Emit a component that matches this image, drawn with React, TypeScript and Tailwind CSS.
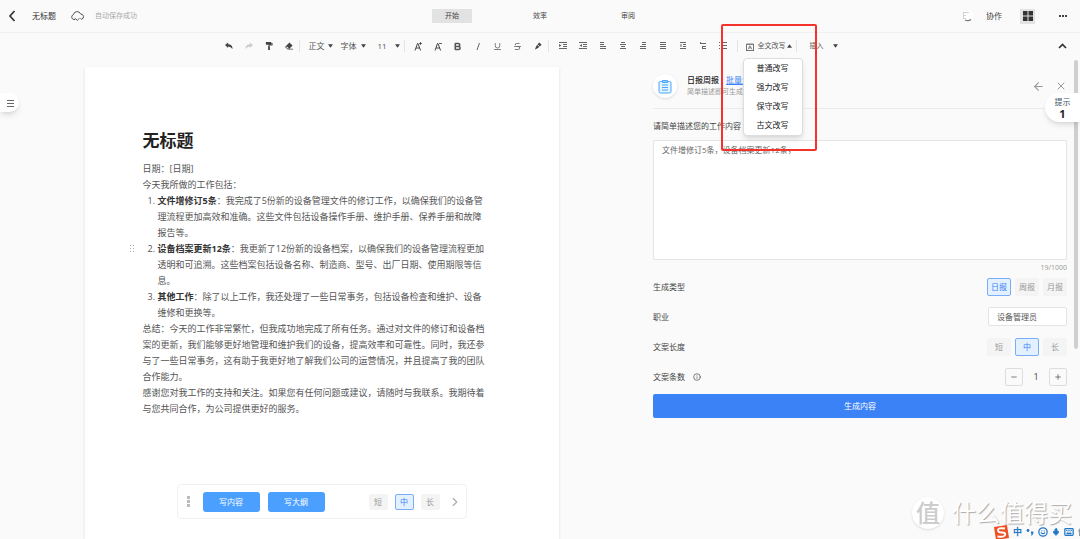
import React from "react";
import { Bold, Underline, Strikethrough, ArrowLeft, X, Info, Minus, Plus, Mic, Keyboard, Smile, ChevronRight } from "lucide-react";

type Kids = { children: React.ReactNode };

function Tool({ label, children }: Kids & { label: string }) {
  return (
    <button aria-label={label} className="flex h-5 w-5 items-center justify-center">
      {children}
    </button>
  );
}

function Glyph({ d, fill = "#444" }: { d: string; fill?: string }) {
  return (
    <svg viewBox="0 0 9 9" className="h-2 w-2" fill={fill} fillRule="evenodd">
      <path d={d} />
    </svg>
  );
}

function Lines({ d, marks = "" }: { d: string; marks?: string }) {
  return (
    <svg viewBox="0 0 8 8" className="h-2 w-2" fill="none" stroke="#666">
      <path d={d} />
      <path d={marks} fill="#666" stroke="none" />
    </svg>
  );
}

function Separator() {
  return <div className="h-3 w-px bg-[#e4e4e4]" />;
}

function Caret({ up = false }: { up?: boolean }) {
  return (
    <svg viewBox="0 0 6 4" className="h-1 w-[5px]" fill="#444">
      <path d={up ? "M0 4 3 0l3 4z" : "M0 0h6L3 4z"} />
    </svg>
  );
}

function Picker({ text, className }: { text: string; className: string }) {
  return (
    <button className={"flex items-center justify-between " + className}>
      <span>{text}</span>
      <Caret />
    </button>
  );
}

function FontSizeIcon({ up }: { up: boolean }) {
  return (
    <svg viewBox="0 0 8 9" className="h-[9px] w-2" fill="none" stroke="#444">
      <path d="M1 8.500 3.500 1.500H4l2.600 7M2 6h3.800" />
      <path d={up ? "M5 1.500h3M6.500 0v3" : "M5 1.500h3"} strokeWidth=".8" />
    </svg>
  );
}

function Choice({ text, active = false, small = false }: { text: string; active?: boolean; small?: boolean }) {
  return (
    <button
      className={
        "flex items-center justify-center rounded-xs border text-[8px] " +
        (small ? "h-4 w-[19px] " : "h-[18px] w-6 ") +
        (active ? "border-[#79adf8] bg-[#e3f0ff] text-[#3b82f6]" : "border-[#f4f4f4] bg-[#f4f4f4] text-[#999]")
      }
    >
      {text}
    </button>
  );
}

function Row({ label, children }: Kids & { label: React.ReactNode }) {
  return (
    <div className="flex h-[19px] items-center justify-between">
      <span className="flex items-center gap-2 text-[8px] text-[#444]">{label}</span>
      <div className="flex items-center gap-1">{children}</div>
    </div>
  );
}

function Header() {
  return (
    <header className="relative flex h-[33px] items-center border-b border-[#f1f1f1] text-[8px]">
      <button aria-label="返回" className="ml-1 flex w-4 justify-center">
        <svg viewBox="0 0 8 12" className="h-3 w-2" fill="none" stroke="#333" strokeWidth="1.700">
          <path d="M6.500 1 2 6l4.500 5" />
        </svg>
      </button>
      <span className="ml-3 text-[#333]">无标题</span>
      <svg viewBox="0 0 13 10" className="ml-[15px] h-[10px] w-[13px]" fill="none" stroke="#555">
        <path d="M4 8.500H3A2.500 2.500 0 0 1 2.500 3.600 3.700 3.700 0 0 1 9.600 3 2.700 2.700 0 0 1 10.500 8.300L9.600 7.200M3.800 7.200 6.300 9.300 8.500 7.300" />
      </svg>
      <span className="ml-[11px] text-[7px] text-[#aaa]">自动保存成功</span>
      <nav className="absolute inset-x-0 flex justify-center">
        <div className="flex gap-12 text-[7px] text-[#444]">
          <button className="h-[14px] w-10 rounded-[1px] bg-[#e2e2e2]">开始</button>
          <button className="h-[14px] w-10">效率</button>
          <button className="h-[14px] w-10">审阅</button>
        </div>
      </nav>
      <div className="relative ml-auto flex items-center pr-[13px]">
        <svg viewBox="0 0 12 12" className="h-3 w-3" fill="none">
          <rect x="1" y="1" width="10" height="9" rx="4" fill="#fff" />
          <path d="M1 2.500h6M1 5.500h3M1 8.500h3M1.500 2v7" stroke="#d2d2d2" />
          <path d="M3 10q3 1.500 6-.5" stroke="#777" strokeWidth="1.300" />
        </svg>
        <button className="ml-3">协作</button>
        <button aria-label="网格" className="ml-[18px] flex h-[15px] w-[15px] items-center justify-center bg-[#e2e2e2]">
          <svg viewBox="0 0 10 10" className="h-[10px] w-[10px]" fill="#333">
            <path d="M0 0h4.500v4.500H0zM5.500 0H10v4.500H5.500zM0 5.500h4.500V10H0zM5.500 5.500H10V10H5.500z" />
          </svg>
        </button>
        <button aria-label="更多" className="ml-6">
          <svg viewBox="0 0 8 2" className="h-[2px] w-2" fill="#444">
            <path d="M0 0h2v2H0zM3 0h2v2H3zM6 0h2v2H6z" />
          </svg>
        </button>
      </div>
    </header>
  );
}

function RewriteMenu() {
  return (
    <div className="relative ml-2 flex items-center">
      <button className="flex items-center text-[7px]">
        <svg viewBox="0 0 9 9" className="mr-1 mt-px h-2 w-2" fill="none" stroke="#666">
          <rect x=".5" y="1.500" width="8" height="7" />
          <path d="M1 0h7M2.500 7 4.500 3l2 4M3 5.500h3" strokeWidth=".8" />
        </svg>
        <span className="mr-px">全文改写</span>
        <Caret up />
      </button>
      <div className="absolute -left-[3px] top-[17px] z-20 flex w-[60px] flex-col rounded-sm border border-[#ddd] bg-white text-[8px] text-[#222] shadow-md">
        {["普通改写", "强力改写", "保守改写", "古文改写"].map((t) => (
          <button key={t} className="h-[19px]">{t}</button>
        ))}
      </div>
      <div className="pointer-events-none absolute -left-[25px] -top-[17px] z-30 h-[127px] w-[96px] rounded-xs border-2 border-[#f5322b]" />
    </div>
  );
}

function Toolbar() {
  const icon = "h-[9px] w-[9px]";
  return (
    <div className="flex h-[26px] items-center text-[8px] text-[#555]">
      <div className="flex flex-1 items-center justify-center pr-3">
        <div className="ml-[10px] flex">
          <Tool label="撤销"><Glyph d="M0 3.500 3.500.5V2.500Q8.500 2.500 8.500 8 6.500 5 3.500 5v1.800z" /></Tool>
          <Tool label="重做"><Glyph fill="#ccc" d="M9 3.500 5.500.5V2.500Q.5 2.500.5 8 2.500 5 5.500 5v1.800z" /></Tool>
          <Tool label="格式刷"><Glyph d="M1 0h6v1h1.500v3H5v1h.5v4h-2V4.500H4V3h3.500V2H7v1H1z" /></Tool>
          <Tool label="清除格式"><Glyph d="M5 .5 8.500 4 5 7.500h4v1H3L0 5.500zM2 5 1.200 5.700 3.200 7.500 4.500 7z" /></Tool>
        </div>
        <Separator />
        <Picker text="正文" className="ml-[9px] w-6" />
        <Picker text="字体" className="ml-2 w-[25px]" />
        <Picker text="11" className="ml-3 w-[22px]" />
        <div className="w-1" />
        <Separator />
        <div className="ml-[3px] flex">
          <Tool label="增大字号"><FontSizeIcon up /></Tool>
          <Tool label="减小字号"><FontSizeIcon up={false} /></Tool>
          <Tool label="加粗"><Bold className={icon} strokeWidth={4} /></Tool>
          <Tool label="斜体">
            <svg viewBox="0 0 8 9" className="h-[9px] w-2" fill="none" stroke="#666"><path d="M5.500 1 3 8" /></svg>
          </Tool>
          <Tool label="下划线"><Underline className={icon} strokeWidth={2} /></Tool>
          <Tool label="删除线"><Strikethrough className={icon} strokeWidth={2} /></Tool>
          <Tool label="突出显示"><Glyph d="m6 .5 2.500 2.500L6.500 5 4 2.500zM3.500 3 6 5.500 3 7.500 1 8.500 2 6z" /></Tool>
        </div>
        <Separator />
        <div className="ml-1 flex">
          <Tool label="增加缩进"><Lines d="M0 .5h8M4 2.500h4M4 4.500h4M0 6.500h8" marks="M0 2l2.500 1.500L0 5z" /></Tool>
          <Tool label="减少缩进"><Lines d="M0 .5h8M4 2.500h4M4 4.500h4M0 6.500h8" marks="M3 2 .5 3.500 3 5z" /></Tool>
          <Tool label="左对齐"><Lines d="M1 .5h4M1 2.500h4M1 4.500h6M1 6.500h6" /></Tool>
          <Tool label="居中"><Lines d="M2 .5h4M1 2.500h6M2 4.500h4M1 6.500h6" /></Tool>
          <Tool label="右对齐"><Lines d="M3 .5h4M3 2.500h4M1 4.500h6M1 6.500h6" /></Tool>
          <Tool label="两端对齐"><Lines d="M1 .5h6M1 2.500h6M1 4.500h6M1 6.500h6" /></Tool>
          <Tool label="行距"><Lines d="M1 .5h6M4 2.500h3M4 4.500h3M1 6.500h6" marks="M1.500 2h1v3h-1z" /></Tool>
          <Tool label="编号列表"><Lines d="M2 1.500h5M4 4.500h3M4 6.500h3M1.500 0v2M3.500 4v3" /></Tool>
          <Tool label="项目符号"><Lines d="M3 .5h5M3 3.500h5M3 6.500h5" marks="M0 0h1v1H0zM0 3h1v1H0zM0 6h1v1H0z" /></Tool>
        </div>
        <div className="w-1" />
        <Separator />
        <RewriteMenu />
        <div className="w-1" />
        <Separator />
        <Picker text="插入" className="ml-[13px] w-7 text-[7px]" />
      </div>
      <button aria-label="收起" className="mr-[13px]">
        <svg viewBox="0 0 9 6" className="h-[6px] w-[9px]" fill="none" stroke="#333" strokeWidth="1.700">
          <path d="M1 5 4.500 1.500 8 5" />
        </svg>
      </button>
    </div>
  );
}

function Item({ n, title, children }: Kids & { n: number; title: string }) {
  return (
    <li className="relative flex">
      {n === 2 && (
        <svg viewBox="0 0 5 8" className="absolute -left-[18px] top-1 h-2 w-[5px]" fill="#aaa">
          <path d="M0 0h1v1H0zM3 0h1v1H3zM0 3h1v1H0zM3 3h1v1H3zM0 6h1v1H0zM3 6h1v1H3z" />
        </svg>
      )}
      <span className="w-[10px] shrink-0">{n}.</span>
      <p><b className="text-[#333]">{title}</b>{children}</p>
    </li>
  );
}

function Editor() {
  return (
    <section className="relative flex flex-1 justify-center pt-2">
      <button aria-label="目录" className="absolute left-0 top-[34px] flex h-[19px] w-[19px] items-center justify-center rounded-r-full bg-white shadow-md">
        <Lines d="M1 1.500h7M1 4.500h7M1 7.500h7" />
      </button>
      <article className="flex w-[474px] flex-col bg-white pb-5 text-[9px] leading-4 text-[#555] shadow">
        <div className="px-[58px] pt-[61px]">
          <h1 className="mb-2 text-[17px] font-bold leading-[25px] text-[#222]">无标题</h1>
          <div className="w-[345px]">
            <p>日期：[日期]</p>
            <p>今天我所做的工作包括：</p>
            <ol className="pl-[5px]">
              <Item n={1} title="文件增修订5条">：我完成了5份新的设备管理文件的修订工作，以确保我们的设备管理流程更加高效和准确。这些文件包括设备操作手册、维护手册、保养手册和故障报告等。</Item>
              <Item n={2} title="设备档案更新12条">：我更新了12份新的设备档案，以确保我们的设备管理流程更加透明和可追溯。这些档案包括设备名称、制造商、型号、出厂日期、使用期限等信息。</Item>
              <Item n={3} title="其他工作">：除了以上工作，我还处理了一些日常事务，包括设备检查和维护、设备维修和更换等。</Item>
            </ol>
            <p>总结：今天的工作非常繁忙，但我成功地完成了所有任务。通过对文件的修订和设备档案的更新，我们能够更好地管理和维护我们的设备，提高效率和可靠性。同时，我还参与了一些日常事务，这有助于我更好地了解我们公司的运营情况，并且提高了我的团队合作能力。</p>
            <p>感谢您对我工作的支持和关注。如果您有任何问题或建议，请随时与我联系。我期待着与您共同合作，为公司提供更好的服务。</p>
          </div>
        </div>
        <div className="mx-auto mt-auto flex h-[35px] w-[290px] items-center rounded-sm border border-[#f1f1f1] pl-[9px] pr-1 text-[8px]">
          <svg viewBox="0 0 3 11" className="h-[11px] w-[3px]" fill="#bbb">
            <path d="M0 0h3v3H0zM0 4h3v3H0zM0 8h3v3H0z" />
          </svg>
          <button className="ml-[13px] h-5 w-[57px] rounded-[3px] bg-[#4b9fff] text-white">写内容</button>
          <button className="ml-2 h-5 w-[57px] rounded-[3px] bg-[#4b9fff] text-white">写大纲</button>
          <div className="ml-auto flex gap-[7px]">
            <Choice small text="短" />
            <Choice small text="中" active />
            <Choice small text="长" />
          </div>
          <button aria-label="下一步" className="ml-2"><ChevronRight className="h-[14px] w-[14px] text-[#aaa]" /></button>
        </div>
      </article>
    </section>
  );
}

function Panel() {
  const step = "flex h-[18px] w-[18px] items-center justify-center rounded-xs border border-[#ddd]";
  return (
    <aside className="relative w-[437px] pl-[10px] pr-[13px]">
      <div className="flex h-[50px] items-center border-b border-[#ececec] pt-[5px]">
        <div className="flex h-6 w-6 shrink-0 items-center justify-center rounded-full bg-white shadow">
          <svg viewBox="0 0 14 15" className="h-[15px] w-[14px]" fill="none" stroke="#4aa5fa">
            <rect x="1" y="2.500" width="12" height="11.500" rx="1.500" fill="#e2f4ff" />
            <path d="M4 6h6M4 8.500h6M4 11h6" />
            <path d="M4.500 3.500v-2h5v2z" fill="#8fd0ff" />
          </svg>
        </div>
        <div className="ml-[10px]">
          <div className="flex gap-[7px] text-[8px] leading-3">
            <h2 className="font-medium text-[#222]">日报周报</h2>
            <a href="#batch" className="text-[#3b82f6] underline">批量生成</a>
          </div>
          <p className="text-[7px] leading-3 text-[#999]">简单描述即可生成日报周报工作内容</p>
        </div>
        <div className="ml-auto flex gap-[10px] text-[#999]">
          <button aria-label="后退"><ArrowLeft className="h-[13px] w-[13px]" strokeWidth={2} /></button>
          <button aria-label="关闭"><X className="h-3 w-3" strokeWidth={2} /></button>
        </div>
      </div>
      <label htmlFor="work" className="mt-[11px] block text-[8px] leading-3 text-[#444]">请简单描述您的工作内容</label>
      <textarea id="work" defaultValue="文件增修订5条，设备档案更新12条，" className="mt-2 block h-[120px] w-full resize-none rounded-xs border border-[#e4e4e4] bg-white px-2 py-1 text-[8px] leading-[10px] text-[#666]" />
      <div className="mt-[2px] text-right text-[7px] leading-3 text-[#999]">19/1000</div>
      <div className="mt-[3px] flex flex-col gap-[11px]">
        <Row label="生成类型"><Choice text="日报" active /><Choice text="周报" /><Choice text="月报" /></Row>
        <Row label={<label htmlFor="job">职业</label>}>
          <input id="job" defaultValue="设备管理员" className="h-[19px] w-[79px] rounded-xs border border-[#e4e4e4] bg-white px-2 text-[8px] text-[#555]" />
        </Row>
        <Row label="文案长度"><Choice text="短" /><Choice text="中" active /><Choice text="长" /></Row>
        <Row label={<>文案条数<Info className="h-2 w-2" /></>}>
          <button aria-label="减少" className={step}><Minus className="h-2 w-2" /></button>
          <span className="w-[18px] text-center text-[9px]">1</span>
          <button aria-label="增加" className={step}><Plus className="h-2 w-2" /></button>
        </Row>
      </div>
      <button className="mt-2 h-6 w-full rounded-xs bg-[#3b82f6] text-[8px] text-white">生成内容</button>
      <div className="absolute right-[2px] top-px h-[289px] w-1 rounded-full bg-[#cfcfcf]" />
      <button className="absolute right-0 top-[34px] flex h-[29px] w-[35px] flex-col items-center justify-center rounded-l-full bg-white shadow-md">
        <span className="text-[8px] leading-[12px] text-[#456]">提示</span>
        <b className="text-[11px] leading-[12px] text-[#222]">1</b>
      </button>
    </aside>
  );
}

function Watermark() {
  return (
    <div className="absolute bottom-[10px] right-2 flex items-center gap-2">
      <span className="flex h-8 w-8 items-center justify-center rounded-full bg-white text-[24px] font-medium text-[#ccc] shadow">值</span>
      <span className="text-[24px] leading-8 text-white [text-shadow:1px_1px_1px_#aaa]">什么值得买</span>
    </div>
  );
}

function InputMethodBar() {
  return (
    <div className="absolute bottom-0 right-0 flex h-[14px] items-center gap-1 text-[#2176c7]">
      <svg viewBox="0 0 16 15" className="h-[15px] w-4">
        <path d="M1 2 14 0l2 13-13 2z" fill="#f04f23" />
        <path d="M12 3.500Q5 2.500 5 5t4 2.500T12 10t-7.500 1.500" stroke="#fff" strokeWidth="2" fill="none" />
      </svg>
      <b className="text-[9px] leading-3">中</b>
      <svg viewBox="0 0 8 8" className="h-2 w-2" fill="currentColor">
        <circle cx="2" cy="2.500" r="1.400" />
        <path d="M5 3.500h2.300v2L6 7.500H5l.8-1.800H5z" />
      </svg>
      <Smile className="h-[10px] w-[10px]" strokeWidth={3} />
      <Mic className="h-[10px] w-2" fill="currentColor" strokeWidth={3} />
      <Keyboard className="h-[10px] w-[10px]" strokeWidth={3} />
      <svg viewBox="0 0 2 8" className="h-2 w-[2px]" fill="#999"><path d="M2 0v8H1V4L0 3z" /></svg>
    </div>
  );
}

export default function App() {
  return (
    <div className="relative flex min-h-screen flex-col overflow-hidden bg-[#fafafa] font-['Open_Sans','Noto_Sans_CJK_SC',sans-serif] text-[#444]">
      <Header />
      <Toolbar />
      <main className="flex flex-1">
        <Editor />
        <Panel />
      </main>
      <Watermark />
      <InputMethodBar />
    </div>
  );
}
